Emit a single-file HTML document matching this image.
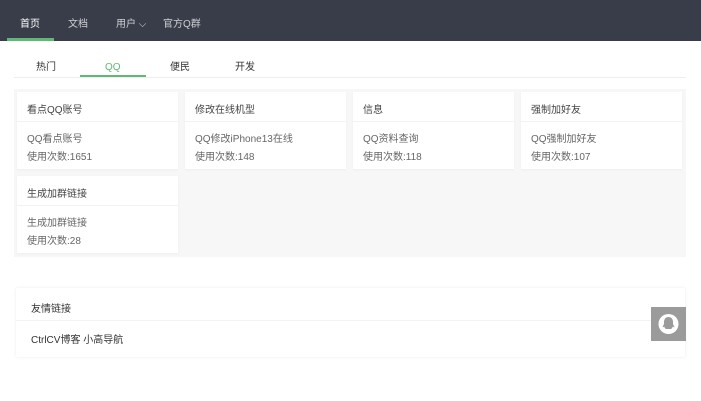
<!DOCTYPE html>
<html><head><meta charset="utf-8"><style>
*{margin:0;padding:0;box-sizing:border-box}
body{width:701px;height:401px;background:#fff;font-family:"Liberation Sans","Noto Sans CJK SC",sans-serif;font-size:10px;color:#333;position:relative;overflow:hidden}
.nav{position:absolute;left:0;top:0;width:701px;height:41px;background:#393D49}
.nav span{position:absolute;top:15px;color:rgba(255,255,255,.75);font-size:10px}
.nav .g{position:absolute;left:7px;top:38px;width:47px;height:3px;background:#5FB878}
.tabs span{position:absolute;top:58px;font-size:10px;color:#333}
.tl{position:absolute;left:80px;top:75px;width:66px;height:2px;background:#5FB878}
.tline{position:absolute;left:14px;top:77px;width:672px;height:1px;background:#eee}
.panel{position:absolute;left:14px;top:89px;width:672px;height:168px;background:#f7f7f7}
.card{position:absolute;width:161px;height:77px;background:#fff;box-shadow:0 1px 2px rgba(0,0,0,.04)}
.card .h{height:30px;border-bottom:1px solid #f3f3f3;padding:9px 0 0 10px;color:#444}
.card .b{padding:9px 0 0 10px;color:#666;line-height:18px}
.fl{position:absolute;left:16px;top:288px;width:669px;height:69px;background:#fff;box-shadow:0 0 3px rgba(0,0,0,.08)}
.fl .h{height:33px;border-bottom:1px solid #f3f3f3;padding:12px 0 0 15px}
.fl .b{padding:10px 0 0 15px}
.qq{position:absolute;left:651px;top:307px;width:35px;height:34px;background:#9b9b9b}
</style></head><body>
<div class="nav"><span style="left:20px;color:#fff">首页</span><span style="left:68px">文档</span><span style="left:116px">用户 ⌵</span><span style="left:163px">官方Q群</span><div class="g"></div></div>
<div class="tabs"><span style="left:36px">热门</span><span style="left:105px;color:#5FB878;top:62px">QQ</span><span style="left:170px">便民</span><span style="left:235px">开发</span></div>
<div class="tl"></div><div class="tline"></div>
<div class="panel"></div>
<div class="card" style="left:17px;top:92px"><div class="h">看点QQ账号</div><div class="b">QQ看点账号<br>使用次数:1651</div></div>
<div class="card" style="left:185px;top:92px"><div class="h">修改在线机型</div><div class="b">QQ修改iPhone13在线<br>使用次数:148</div></div>
<div class="card" style="left:353px;top:92px"><div class="h">信息</div><div class="b">QQ资料查询<br>使用次数:118</div></div>
<div class="card" style="left:521px;top:92px"><div class="h">强制加好友</div><div class="b">QQ强制加好友<br>使用次数:107</div></div>
<div class="card" style="left:17px;top:176px"><div class="h">生成加群链接</div><div class="b">生成加群链接<br>使用次数:28</div></div>
<div class="fl"><div class="h">友情链接</div><div class="b">CtrlCV博客 小高导航</div></div>
<div class="qq"><svg width="35" height="34" viewBox="0 0 35 34"><circle cx="17.5" cy="17" r="10" fill="#fff"/><path d="M17.5 10c-3 0-4.5 2.3-4.5 5v2l-1.5 3c.5.5 1.2 0 1.7-.5.3 1.2 1 2 1.8 2.5h5c.8-.5 1.5-1.3 1.8-2.5.5.5 1.2 1 1.7.5l-1.5-3v-2c0-2.7-1.5-5-4.5-5z" fill="#9b9b9b"/></svg></div>
</body></html>
